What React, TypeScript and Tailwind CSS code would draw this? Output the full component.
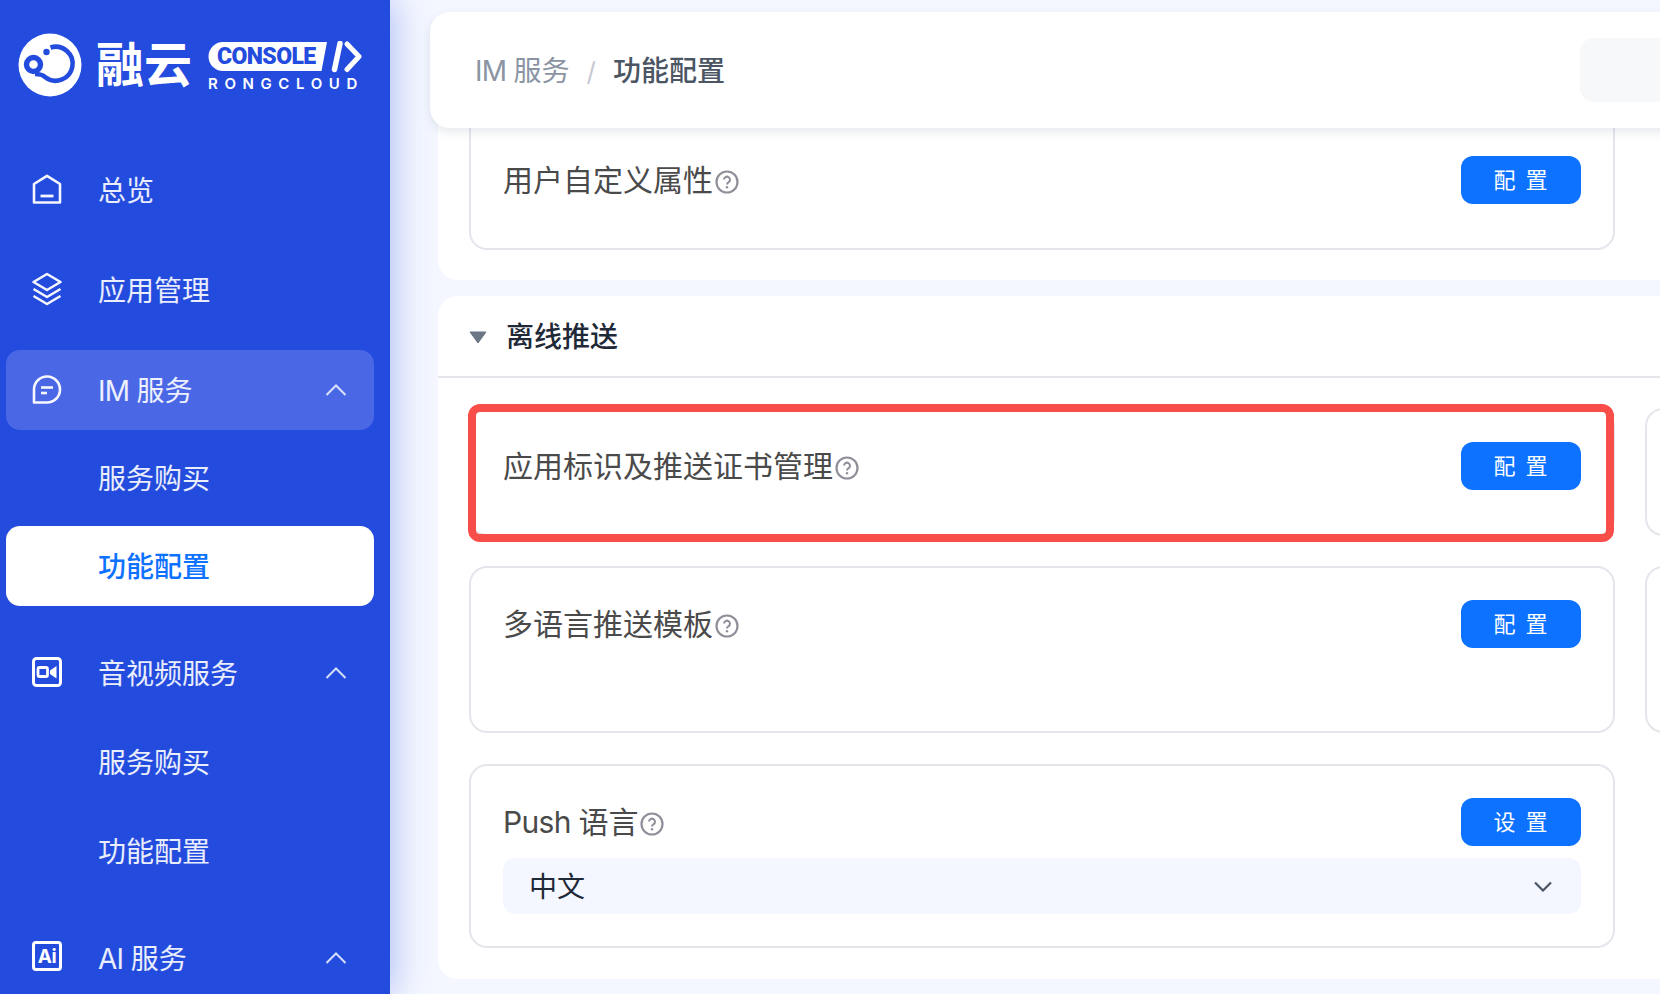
import type { ReactNode } from "react";

const fontStack = "font-[family-name:Inter,'Noto_Sans_CJK_SC',sans-serif]";

const ChevronUp = () => (
  <svg width="22" height="12" viewBox="0 0 22 12" fill="none" stroke="currentColor" strokeWidth="2" className="ml-auto mr-[27px] opacity-90">
    <path d="M1.5 11 L11 1.5 L20.5 11" />
  </svg>
);

const HomeIcon = () => (
  <svg width="30" height="30" viewBox="0 0 30 30" fill="none" stroke="currentColor" strokeWidth="2.6">
    <path d="M2 28.5 V10 L15 1.8 L28 10 V28.5 Z" strokeLinejoin="round" />
    <path d="M8.5 22 H21.5" strokeWidth="2.8" />
  </svg>
);

const LayersIcon = () => (
  <svg width="32" height="34" viewBox="0 0 32 34" fill="none" stroke="currentColor" strokeWidth="2.6" strokeLinejoin="round">
    <path d="M16 2 L29.5 10 L16 18 L2.5 10 Z" />
    <path d="M2.5 17 L16 25 L29.5 17" />
    <path d="M2.5 24 L16 32 L29.5 24" />
  </svg>
);

const ChatIcon = () => (
  <svg width="30" height="30" viewBox="0 0 30 30" fill="none" stroke="currentColor" strokeWidth="2.6">
    <path d="M2 28.5 V15 A13 13 0 1 1 15 28.5 Z" strokeLinejoin="round" />
    <path d="M9 13.5 H21" />
    <path d="M9 19 H15" />
  </svg>
);

const VideoIcon = () => (
  <svg width="30" height="30" viewBox="0 0 30 30" fill="none" className="text-white">
    <rect x="1.5" y="1.5" width="27" height="27" rx="3" stroke="currentColor" strokeWidth="3" />
    <rect x="6" y="10.5" width="9.5" height="9" rx="1.5" stroke="currentColor" strokeWidth="2.8" />
    <path d="M24.5 9 V21.5 L18 17 V13.5 Z" fill="currentColor" />
  </svg>
);

const AiIcon = () => (
  <div className="w-[30px] h-[30px] mt-[-2px] rounded-[4px] border-[3px] border-white flex items-center justify-center text-[19px] font-bold leading-none tracking-[-0.5px] text-white">
    Ai
  </div>
);

const HelpIcon = () => (
  <svg width="24" height="24" viewBox="0 0 24 24" fill="none" stroke="#8e8f99" strokeWidth="2.2" className="ml-[2px] mt-[4px] shrink-0">
    <circle cx="12" cy="12" r="10.5" />
    <path d="M9 9.6 A3 3 0 1 1 13.6 12.2 C12.6 12.8 12 13.4 12 14.6" strokeWidth="2" />
    <circle cx="12" cy="17.3" r="1.2" fill="#8e8f99" stroke="none" />
  </svg>
);

const Logo = () => (
  <div className="flex items-center h-[64px] ml-[18px] mt-[33px] text-white">
    <svg width="64" height="64" viewBox="0 0 64 64" className="shrink-0">
      <circle cx="32" cy="32" r="31.5" fill="#fff" />
      <path
        d="M32.5 14.5 A17 17 0 1 1 27 44 C24 41 21 41 17 41"
        fill="none"
        stroke="#234bdd"
        strokeWidth="4.6"
      />
      <circle cx="15.5" cy="31.5" r="7" fill="#fff" stroke="#234bdd" strokeWidth="5.4" />
      <circle cx="28.5" cy="19" r="3.2" fill="#234bdd" />
    </svg>
    <span className="ml-[14px] text-[48px] font-bold leading-none">融云</span>
    <div className="ml-[16px] mt-[3px] flex flex-col">
      <div className="relative w-[154px] h-[32px]">
        <svg width="154" height="32" viewBox="0 0 154 32" className="absolute left-0 top-0">
          <path d="M15 1 H119 L113.5 30 H15 A14.5 14.5 0 0 1 15 1 Z" fill="#fff" />
          <path d="M132 2.5 L126.5 28.5" stroke="#fff" strokeWidth="5.5" strokeLinecap="round" fill="none" />
          <path d="M139 3 L151 15.5 L139 28.5" stroke="#fff" strokeWidth="5" strokeLinecap="round" strokeLinejoin="round" fill="none" />
        </svg>
        <span className="absolute left-[9px] top-[3px] font-[family-name:Roboto,sans-serif] text-[23px] font-black leading-[25px] tracking-[-0.6px] text-[#234bdd]">CONSOLE</span>
      </div>
      <span className="mt-[3px] text-[15px] font-semibold leading-[16px] tracking-[6.6px] whitespace-nowrap">RONGCLOUD</span>
    </div>
  </div>
);

// Latin words in the picture run a bit tighter than Inter
const Latin = ({ children }: { children: ReactNode }) => <span className="tracking-[-0.7px]">{children}</span>;

interface NavRowProps {
  icon?: ReactNode;
  label: ReactNode;
  chevron?: boolean;
  active?: boolean;
}

const NavRow = ({ icon, label, chevron, active }: NavRowProps) => (
  <div className={`flex items-center h-[80px] rounded-[14px] text-[28px] text-white/90 ${active ? "bg-[#4a67e6]" : ""}`}>
    <div className="w-[92px] shrink-0 flex justify-center pr-[10px] pb-[2px] text-white/95">{icon}</div>
    <span className="pt-[2px]">{label}</span>
    {chevron && <ChevronUp />}
  </div>
);

const SubRow = ({ label, selected }: { label: string; selected?: boolean }) => (
  <div
    className={`flex items-center h-[80px] pl-[92px] pt-[1px] rounded-[14px] text-[28px] ${
      selected ? "bg-white text-[#0d72ff] font-medium" : "text-white/90"
    }`}
  >
    {label}
  </div>
);

const Sidebar = () => (
  <aside className="relative z-10 w-[390px] h-[994px] shrink-0 overflow-hidden bg-[#234bdd] shadow-[2px_0_34px_rgba(35,75,221,0.36)]">
    <Logo />
    <nav className="flex flex-col px-[6px] pr-[16px] mt-[53px]">
      <NavRow icon={<HomeIcon />} label="总览" />
      <div className="mt-[20px]">
        <NavRow icon={<LayersIcon />} label="应用管理" />
      </div>
      <div className="mt-[20px] flex flex-col gap-[8px]">
        <NavRow icon={<ChatIcon />} label={<><Latin>IM </Latin>服务</>} chevron active />
        <SubRow label="服务购买" />
        <SubRow label="功能配置" selected />
      </div>
      <div className="mt-[27px] flex flex-col gap-[9px]">
        <NavRow icon={<VideoIcon />} label="音视频服务" chevron />
        <SubRow label="服务购买" />
        <SubRow label="功能配置" />
      </div>
      <div className="mt-[27px]">
        <NavRow icon={<AiIcon />} label={<><Latin>AI </Latin>服务</>} chevron />
      </div>
    </nav>
  </aside>
);

const ActionButton = ({ label }: { label: string }) => (
  <button className="w-[120px] h-[48px] shrink-0 rounded-[12px] bg-[#0d72ff] text-white text-[22px] tracking-[2px] pl-[1px]">
    {label}
  </button>
);

const FeatureHead = ({ label, action }: { label: ReactNode; action: string }) => (
  <div className="flex items-center justify-between">
    <div className="flex items-center text-[30px] leading-[40px] text-[#4a4a4a]">
      <span>{label}</span>
      <HelpIcon />
    </div>
    <ActionButton label={action} />
  </div>
);

const Card = ({ children, className = "" }: { children?: ReactNode; className?: string }) => (
  <div className={`relative rounded-[18px] border-2 border-[#e5e6ec] bg-white px-[32px] pt-[32px] ${className}`}>{children}</div>
);

const Header = () => (
  <header className="absolute left-[40px] top-[12px] z-[5] flex items-center w-[1400px] h-[116px] rounded-[20px] bg-white pl-[45px] pt-[2px] shadow-[0_4px_10px_rgba(60,70,110,0.12)]">
    <span className="text-[28px] text-[#8a94a3]"><Latin>IM </Latin>服务</span>
    <span className="ml-[17px] mr-[17px] text-[26px] text-[#c5cad3]">/</span>
    <span className="text-[28px] font-medium text-[#4b5563]">功能配置</span>
    <div className="ml-auto mt-[-2px] w-[250px] h-[64px] rounded-[14px] bg-[#f7f8fa]" />
  </header>
);

export default function App() {
  return (
    <div className={`flex w-[1660px] h-[994px] overflow-hidden bg-[#f4f7ff] ${fontStack}`}>
      <Sidebar />
      <main className="relative flex-1 h-[994px] overflow-hidden">
        <Header />
        <div className="flex flex-col w-[2400px] ml-[48px] gap-[16px] pt-[72px]">
          <section className="rounded-[20px] bg-white pt-[30px] pb-[30px] pl-[31px]">
            <Card className="w-[1146px] h-[148px] !pt-[52px]">
              <FeatureHead label="用户自定义属性" action="配 置" />
            </Card>
          </section>

          <section className="rounded-[20px] bg-white">
            <div className="flex items-center h-[82px] pl-[31px] pt-[1px] border-b-2 border-[#e5e6ec] text-[28px] font-medium text-[#1f2937]">
              <svg width="18" height="13" viewBox="0 0 18 13" className="mr-[19px] mt-[1px]">
                <path d="M1 1 H17 L9 12 Z" fill="#6b7785" stroke="#6b7785" strokeLinejoin="round" />
              </svg>
              离线推送
            </div>
            <div className="grid grid-cols-[1146px_1145px] gap-x-[30px] pl-[31px] pt-[30px] pb-[31px]">
              <Card className="h-[128px]">
                <div className="absolute left-[-3px] right-[-1px] top-[-6px] bottom-[-8px] rounded-[12px] border-[8px] border-[#f94d4a]" />
                <FeatureHead label="应用标识及推送证书管理" action="配 置" />
              </Card>
              <Card className="h-[128px]" />
              <Card className="h-[167px] mt-[30px]">
                <FeatureHead label="多语言推送模板" action="配 置" />
              </Card>
              <Card className="h-[167px] mt-[30px]" />
              <Card className="h-[184px] mt-[31px]">
                <FeatureHead label={<><Latin>Push </Latin>语言</>} action="设 置" />
                <div className="mt-[12px] flex items-center justify-between h-[56px] rounded-[12px] bg-[#f4f7ff] pl-[26px] pr-[29px] pt-[1px] text-[28px] text-[#1f2937]">
                  <span>中文</span>
                  <svg width="18" height="11" viewBox="0 0 18 11" fill="none" stroke="#4b5563" strokeWidth="2.2">
                    <path d="M1 1.5 L9 9.5 L17 1.5" />
                  </svg>
                </div>
              </Card>
            </div>
          </section>
        </div>
      </main>
    </div>
  );
}
